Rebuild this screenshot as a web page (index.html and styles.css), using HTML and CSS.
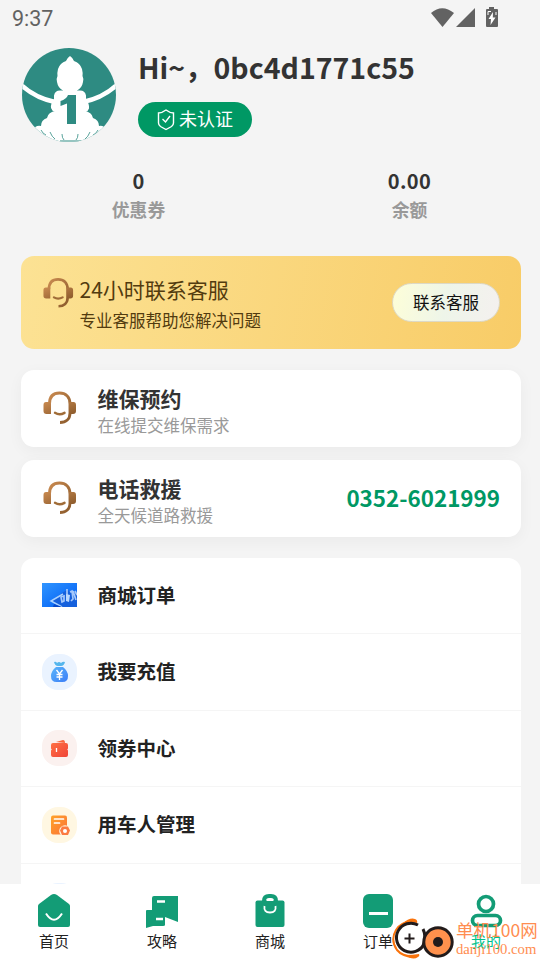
FILE: index.html
```
<!DOCTYPE html>
<html lang="zh-CN">
<head>
<meta charset="utf-8">
<title>我的</title>
<link rel="stylesheet" href="styles.css">
</head>
<body>
<svg class="defs" width="0" height="0" aria-hidden="true">
  <defs>
    <linearGradient id="bronze" x1="0" y1="0" x2="1" y2="1"><stop offset="0" stop-color="#c98a50"/><stop offset="1" stop-color="#8b5a2b"/></linearGradient>
    <symbol id="headset" viewBox="0 0 34 34">
      <path d="M6.500 13C6.500 5.500 10.500 2 16.500 2S27 5.500 27 13v9c0 6-4 9.500-10 9.500" fill="none" stroke="url(#bronze)" stroke-width="2.900"/>
      <path d="M3 11h5v12H3.500Q.5 23 .5 20v-6Q.5 11 3 11zM26 11h4.500q2.500 0 2.500 3v6q0 3-3 3h-4z" fill="url(#bronze)"/>
      <path d="M12 21.800q4.500 2.800 9.500 0" fill="none" stroke="#a06c38" stroke-width="2.500" stroke-linecap="round"/>
    </symbol>
  </defs>
</svg>
<div class="screen">
  <div class="status">
    <span class="time">9:37</span>
    <svg class="signals" width="68" height="22" viewBox="0 0 68 22">
      <g fill="#626262"><path d="M0 5Q11-4.500 23 5L11.500 19z"/><path d="M44 0v19H25z"/>
      <path d="M58 -1h5v2h3q1 0 1 1v16q0 1-1 1H56q-1 0-1-1V2q0-1 1-1h2z"/></g>
      <path d="M62 4l-4.500 7h2.500l-.5 6 5-7.500h-2.700z" fill="#fff"/><path d="M57 7V3.500h3M65 7V4" fill="none" stroke="#fff"/>
    </svg>
  </div>
  <header class="profile">
    <svg class="avatar" viewBox="0 0 94 94">
      <clipPath id="round"><circle cx="47" cy="47" r="47"/></clipPath>
      <g clip-path="url(#round)">
        <rect width="94" height="94" fill="#2e8b82"/>
        <path d="M-2 36Q13 50 33 54M96 36Q81 50 61 54" fill="none" stroke="#fff" stroke-width="4.500"/>
        <g fill="#fff">
          <path d="M48 8Q51 10 52 13 58 15 60 21 61 25 60.500 28 62 31 61 34 60 40 55 42.500L56 46H40L41 42.500Q36 40 35 34 34 31 35.500 28 35 25 36 21 38 15 44 13 45 10 48 8z"/>
          <path d="M38 42.500h20q5 0 6 5v4q3.500 4 3 9-1 3-4 4L67 72H29l4-8q-3-1-4-4-.5-5 3-9v-3.500q1-5 6-5z"/>
          <path d="M34 63h28q8 1 9 7 6 2 6 8 5-1 7 4 6 0 6 3L80 98H14L6 85q0-3 6-3 1-5 7-4 0-6 6-8 1-6 9-7z"/>
        </g>
        <path d="M46 47h8v29h-9V55.500l-6.500 2.500v-5q6-2 7.500-6z" fill="#2e8b82"/>
        <path d="M28 84q2 5 5 7M40 86q0 4 2 6M56 86q0 4-2 6M68 84q-2 5-5 7M19 82q2 4 5 5M76 82q-2 4-5 5" fill="none" stroke="#2e8b82" stroke-width=".8"/>
        <path d="M38 93h21" stroke="#2e8b82" stroke-width="1"/>
      </g>
    </svg>
    <div class="identity">
      <h1>Hi~，0bc4d1771c55</h1>
      <span class="badge">
        <svg width="18" height="22" viewBox="0 0 18 22" fill="none" stroke="#fff" stroke-width="1.400"><path d="M9 1Q5 4 1.500 4v10q0 2 2 3.500L9 20.500l5.500-3q2-1.500 2-3.500V4Q13 4 9 1z"/><path d="M5.500 10l3 3L13 7"/></svg>
        <span class="badge-text">未认证</span>
      </span>
    </div>
  </header>
  <section class="stats">
    <div><strong>0</strong><span>优惠券</span></div>
    <div><strong>0.00</strong><span>余额</span></div>
  </section>
  <section class="support">
    <svg class="headset-small"><use href="#headset"/></svg>
    <div class="support-text"><p class="support-title">24小时联系客服</p><p class="support-sub">专业客服帮助您解决问题</p></div>
    <button class="contact">联系客服</button>
  </section>
  <section class="service">
    <svg class="headset"><use href="#headset"/></svg>
    <div class="service-text"><h2>维保预约</h2><p>在线提交维保需求</p></div>
  </section>
  <section class="service">
    <svg class="headset"><use href="#headset"/></svg>
    <div class="service-text"><h2>电话救援</h2><p>全天候道路救援</p></div>
    <span class="phone">0352-6021999</span>
  </section>
  <section class="menu">
    <div class="row">
      <svg width="35" height="24" viewBox="0 0 35 24"><defs><linearGradient id="sky" x1="0" y1="0" x2="1" y2="1"><stop offset="0" stop-color="#3095ff"/><stop offset=".6" stop-color="#1272f8"/><stop offset="1" stop-color="#0054df"/></linearGradient></defs><rect width="35" height="24" fill="url(#sky)"/><path d="M9 18l11-8 5-3 10 4v13H19z" fill="#1560dc"/><path d="M20 24L9 18l12-7" fill="none" stroke="#a9d1ff" stroke-width="1.500"/><path d="M19 14l3-1v5l-2 1zM28 9l2-1 1 8-2 2M31 8l3 9M33 8l2 4M25 6v6" fill="none" stroke="#a5c8fb" stroke-width="1.700"/><path d="M24 11l4 1-1 7-3-1z" fill="#b9d8ff"/><path d="M12 21l8 3h-9z" fill="#0647c8"/></svg>
      <span>商城订单</span>
    </div>
    <div class="row">
      <svg width="35" height="36" viewBox="0 0 35 36"><defs><linearGradient id="blue" x1="0" y1="0" x2="1" y2="1"><stop offset="0" stop-color="#5ab6fb"/><stop offset="1" stop-color="#3c7df7"/></linearGradient></defs><rect width="35" height="36" rx="16" fill="#eaf3ff"/><path d="M14 13h7q5 4 5 9 0 6-5.500 6h-6Q9 28 9 22q0-5 5-9z" fill="url(#blue)"/><path d="M12 8q2-1 3 1 2-2 4 0 2-2 4-1-1 4-4 4h-3q-3 0-4-4z" fill="#55b6ec"/><path d="M14.500 16l3 4 3-4M17.500 20v6M14.500 20.500h6M14.500 23h6" fill="none" stroke="#fff" stroke-width="1.300"/></svg>
      <span>我要充值</span>
    </div>
    <div class="row">
      <svg width="35" height="36" viewBox="0 0 35 36"><defs><linearGradient id="red" x1="0" y1="0" x2="1" y2="1"><stop offset="0" stop-color="#ff7044"/><stop offset="1" stop-color="#ef4438"/></linearGradient></defs><rect width="35" height="36" rx="16" fill="#fbf1ef"/><path d="M14 12l7-2q2 0 2 3z" fill="#f7663f"/><path d="M11 13h13q2 0 2 2v3.500q-1.500 1 0 2V25q0 2-2 2H11q-2 0-2-2v-4.500q1.500-1 0-2V15q0-2 2-2z" fill="url(#red)"/><path d="M14.500 18v4" stroke="#fff" stroke-width="1.300"/></svg>
      <span>领券中心</span>
    </div>
    <div class="row">
      <svg width="35" height="36" viewBox="0 0 35 36"><defs><linearGradient id="orange" x1="0" y1="0" x2="1" y2="1"><stop offset="0" stop-color="#ffa329"/><stop offset="1" stop-color="#fb7238"/></linearGradient></defs><rect width="35" height="36" rx="16" fill="#fff7e2"/><rect x="9" y="8.500" width="16" height="19" rx="2" fill="url(#orange)"/><path d="M12.500 12h9M12.500 16h5" stroke="#fff" stroke-width="1.700" stroke-linecap="round"/><circle cx="23" cy="24" r="5.800" fill="#fff7e2"/><path d="M20 19.500h6l2 4-2 4.500h-6l-2-4.500z" fill="#fb7a42"/><circle cx="23" cy="24" r="2" fill="#fff"/></svg>
      <span>用车人管理</span>
    </div>
    <div class="row">
      <svg width="35" height="36" viewBox="0 0 35 36"><rect width="35" height="36" rx="16" fill="#eaf3ff"/></svg>
    </div>
  </section>
  <nav class="tabs">
    <div class="tab"><svg viewBox="0 0 34 34"><path d="M14 1q3-2 6 0L32 10q1 1 1 2v19q0 2-2 2H3q-2 0-2-2V12q0-1 1-2z" fill="#139c76"/><path d="M9 19.500q8 12.500 16 0" fill="none" stroke="#fff" stroke-width="2"/></svg>首页</div>
    <div class="tab"><svg viewBox="0 0 34 34"><path d="M9 2h24v26l-13-5v8q0 1-2 1H8l-7 2V17q0-1 1-1h5V4q0-2 2-2z" fill="#139c76"/><path d="M12 7.500h8M11 25h7" stroke="#fff" stroke-width="2.400"/></svg>攻略</div>
    <div class="tab"><svg viewBox="0 0 34 34"><path d="M11 9V7q0-5 5-5h2q5 0 5 5v2" fill="none" stroke="#139c76" stroke-width="4"/><rect x="2.500" y="6.500" width="29" height="26.500" rx="2" fill="#139c76"/><path d="M11.500 12q-1 6.500 5.500 6.500t5.500-6.500M14 6h6" fill="none" stroke="#fff" stroke-width="1.800"/></svg>商城</div>
    <div class="tab"><svg viewBox="0 0 34 34"><rect x="2" y="0" width="30" height="34" rx="6" fill="#139c76"/><path d="M8 19.500h19" stroke="#fff" stroke-width="3"/></svg>订单</div>
    <div class="tab active"><svg viewBox="0 0 34 34" fill="none" stroke="#139c76" stroke-width="3.700"><circle cx="17" cy="10" r="7.500"/><rect x="3.500" y="21.500" width="28" height="10" rx="5"/></svg>我的</div>
  </nav>
  <div class="watermark">
    <svg width="64" height="44" viewBox="0 0 64 44"><path d="M21 5Q10 6 5 14-1 24 6 34q5 6 16 7" fill="none" stroke="#f9730c" stroke-width="2"/><path d="M11 8q8-7 13-5 3 1 2 4-6-2-15 1zM14 39q8 6 13 2 2-1 1-3-6 1-14 1z" fill="#f9730c"/><path d="M27 9A14.500 14.500 0 1 0 33 28" fill="#fff" stroke="#221b1b" stroke-width="3"/><path d="M32 13q4 8 0 17M37 18q3-3 5-3" fill="none" stroke="#221b1b" stroke-width="3"/><path d="M13.500 22.500h10M18.500 17.500v10" stroke="#221b1b" stroke-width="2"/><circle cx="47" cy="26" r="14.200" fill="#ff914d" stroke="#221b1b" stroke-width="3"/><circle cx="47" cy="26" r="5" fill="#221b1b"/></svg>
    <div class="mark-text"><span class="mark-name">单机100网</span><span class="mark-url">danji100.com</span></div>
  </div>
</div>
</body>
</html>
```
FILE: styles.css
```
* { box-sizing: border-box; }
body { margin: 0; background: #f4f4f4; color: #333; font-family: "Noto Sans CJK SC", sans-serif; }
h1, h2, p { margin: 0; }
svg { display: block; flex-shrink: 0; }
.defs { position: absolute; }
.screen { position: relative; width: 540px; height: 960px; overflow: hidden; display: flex; flex-direction: column; }
.status { height: 48px; flex-shrink: 0; padding: 8px 41px 0 12px; display: flex; justify-content: space-between; }
.time { font: 21.500px/22px Roboto, sans-serif; color: #626262; }
.signals { overflow: visible; }
.profile { height: 94px; flex-shrink: 0; padding-left: 22px; display: flex; gap: 22px; }
.avatar { width: 94px; height: 94px; }
.identity { display: flex; flex-direction: column; align-items: flex-start; gap: 16px; }
h1 { font-size: 28.500px; line-height: 38px; font-weight: 700; white-space: nowrap; }
.badge { width: 114px; height: 35px; border-radius: 18px; background: #009864; color: #fff; font-size: 18px; display: flex; align-items: center; gap: 4px; padding-left: 19px; white-space: nowrap; }
.badge-text { line-height: 26px; padding-bottom: 4px; }
.stats { height: 114px; flex-shrink: 0; padding: 26px 0 0 3px; display: grid; grid-template-columns: 271px 271px; text-align: center; }
.stats strong, .stats span { display: block; }
.stats strong { font-size: 20px; line-height: 25px; letter-spacing: .4px; }
.stats span { color: #999; font-size: 17.800px; line-height: 32px; font-weight: 700; }
.support { width: 500px; height: 93px; flex-shrink: 0; margin: 0 0 21px 21px; border-radius: 13px; background: linear-gradient(100deg, #fce294, #f8cc67); display: flex; align-items: flex-start; padding: 19px 21px 0 22px; color: #523b0f; }
.headset-small { width: 31px; height: 32px; margin: 2px 5.500px 0 0; }
.support-text { flex: 1; }
.support-title { font-size: 21px; line-height: 29px; }
.support-sub { font-size: 16.500px; line-height: 32px; }
.contact { width: 108px; height: 39px; margin-top: 8px; padding: 0 0 2px; border: 1px solid #ddd9c6; border-radius: 20px; background: linear-gradient(100deg, #fdfed8, #eef5e9 50%, #f4f0ef); color: #111; font: 16.500px/34px "Noto Sans CJK SC", sans-serif; }
.service { width: 500px; height: 77px; flex-shrink: 0; margin: 0 0 13px 21px; padding: 0 21px 0 22px; border-radius: 13px; background: #fff; box-shadow: 0 4px 16px rgba(0, 0, 0, .045); display: flex; align-items: center; }
.headset { width: 34px; height: 34px; margin: 0 20.500px 2px 0; }
.service-text { flex: 1; padding-top: 7px; }
h2 { font-size: 21px; line-height: 26px; font-weight: 700; }
.service-text p { color: #999; font-size: 16.500px; line-height: 28px; }
.phone { color: #009864; font-size: 22.400px; line-height: 32px; font-weight: 700; padding-bottom: 3px; }
.menu { width: 500px; flex: 1; min-height: 0; overflow: hidden; margin: 8px 0 0 21px; border-radius: 13px 13px 0 0; background: #fff; }
.row { height: 76.500px; padding-left: 21px; display: flex; align-items: center; gap: 20.500px; border-bottom: 1px solid #f5f5f5; color: #222; font-size: 19.500px; line-height: 28px; font-weight: 700; }
.row:first-child { height: 76px; }
.row:first-child svg { margin-bottom: 2px; }
.row span { padding-bottom: 1px; }
.row:last-child { align-items: flex-start; padding-top: 19px; }
.tabs { height: 76px; flex-shrink: 0; background: #fff; display: grid; grid-template-columns: repeat(5, 1fr); }
.tab { padding-top: 10px; display: flex; flex-direction: column; align-items: center; font-size: 15px; line-height: 26px; color: #222; }
.tab svg { width: 34px; height: 34px; }
.tab.active { color: #00c28d; }
.watermark { position: absolute; left: 391px; bottom: 0; display: flex; gap: 1px; color: #ff8d50; }
.mark-text { display: flex; flex-direction: column; white-space: nowrap; }
.mark-name { font-size: 17.500px; line-height: 28px; }
.mark-url { font: 14.700px/10px "Liberation Serif", serif; }
```
